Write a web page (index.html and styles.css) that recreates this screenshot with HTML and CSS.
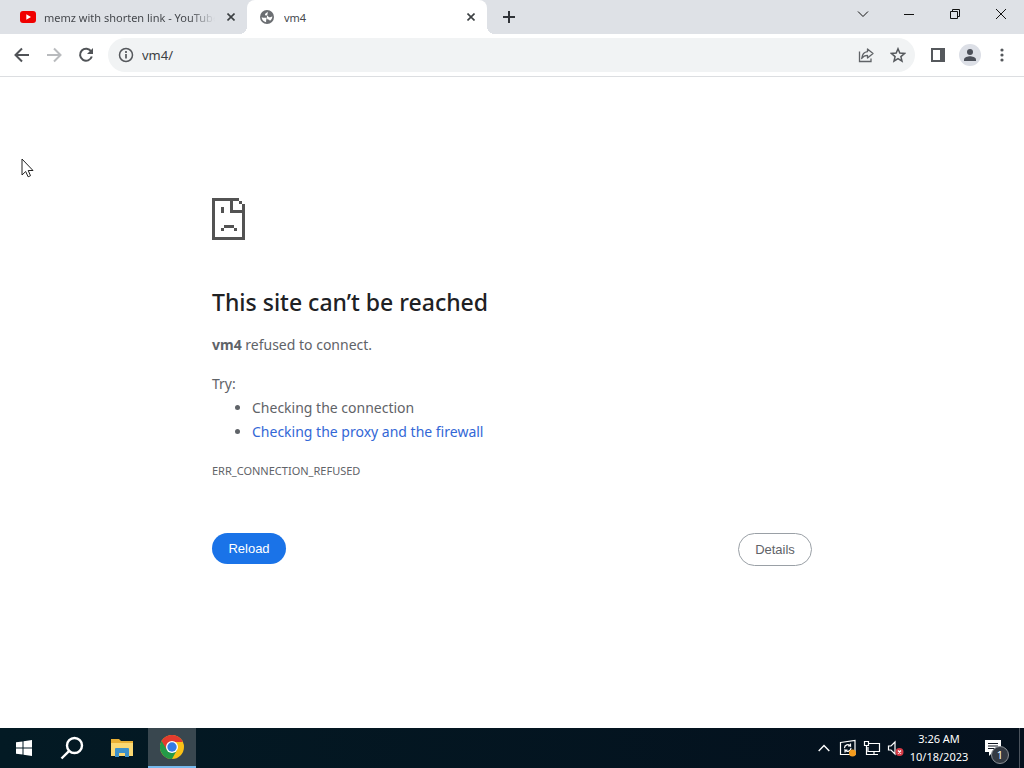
FILE: index.html
```html
<!DOCTYPE html>
<html lang="en">
  <head>
    <meta charset="UTF-8" />
    <title>vm4</title>
    <link rel="stylesheet" href="styles.css">
  </head>
  <body>
    <header class="tabstrip">
      <div class="tab">
        <svg width="16" height="16" viewBox="0 0 16 16">
          <rect x="0" y="2" width="16" height="12" rx="3" fill="#f00000" />
          <path d="M6.3 5.2v5.6L11 8z" fill="#fff" />
        </svg>
        <span class="tab-title faded">memz with shorten link - YouTube</span>
        <button class="tab-close" aria-label="Close tab">
          <svg width="8" height="8" viewBox="0 0 8 8"><path d="M.5.5l7 7M7.5.5l-7 7" /></svg>
        </button>
      </div>
      <div class="tab active">
        <svg width="16" height="16" viewBox="0 0 16 16">
          <circle cx="7" cy="8" r="7" fill="#6b6e72" />
          <path d="M8 2.500c-.2 1.500-2.800 1.200-3 2.800-.1 1.300 1.200 1.400 2.400 1.400.9 0 .8 1.500 2 1.600 1.300 0 1.700-.9 3-.8-.2 2.200-1.400 3.600-2.600 4.300-.3-1-1.300-1.100-2-1.200-.7-.2-.3-1.200-1-1.600C5.800 8.500 4 9 1.600 8.200c.2 2.500 1.900 4.500 4.500 5v-1.500" fill="#fff" />
        </svg>
        <span class="tab-title">vm4</span>
        <button class="tab-close" aria-label="Close tab">
          <svg width="8" height="8" viewBox="0 0 8 8"><path d="M.5.5l7 7M7.5.5l-7 7" /></svg>
        </button>
      </div>
      <button class="new-tab" aria-label="New tab">
        <svg width="12" height="12" viewBox="0 0 12 12"><path d="M6 0v12M0 6h12" stroke="#303338" stroke-width="2" /></svg>
      </button>
      <div class="window-buttons">
        <button aria-label="Search tabs">
          <svg width="12" height="12" viewBox="0 0 12 12"><path d="M1 3.500l5 5 5-5" /></svg>
        </button>
        <button aria-label="Minimize">
          <svg width="12" height="12" viewBox="0 0 12 12"><path d="M1 6.500h10" /></svg>
        </button>
        <button aria-label="Restore">
          <svg width="12" height="12" viewBox="0 0 12 12"><path d="M1.500 3.500h7v7h-7zM3.500 3V1.500h7v7H9" /></svg>
        </button>
        <button aria-label="Close">
          <svg width="12" height="12" viewBox="0 0 12 12"><path d="M1 1l10 10M11 1L1 11" /></svg>
        </button>
      </div>
    </header>

    <div class="toolbar">
      <button aria-label="Back">
        <svg width="16" height="16" viewBox="0 0 16 16"><path d="M15 8H2M8 1.500L1.500 8 8 14.500" stroke="#505357" stroke-width="2" fill="none" /></svg>
      </button>
      <button aria-label="Forward">
        <svg width="16" height="16" viewBox="0 0 16 16"><path d="M1 8h13M8 1.500L14.500 8 8 14.500" stroke="#b9bbbe" stroke-width="2" fill="none" /></svg>
      </button>
      <button aria-label="Reload page">
        <svg width="16" height="16" viewBox="0 0 16 16">
          <path d="M13.200 4.600A6 6 0 1 0 13.800 9.500" stroke="#505357" stroke-width="2" fill="none" />
          <path d="M15 1v6H9z" fill="#505357" />
        </svg>
      </button>
      <div class="omnibox">
        <svg width="16" height="16" viewBox="0 0 16 16">
          <circle cx="8" cy="8" r="6.500" stroke="#55585c" stroke-width="1.500" fill="none" />
          <path d="M8 7v4.500M8 4v2" stroke="#55585c" stroke-width="1.700" />
        </svg>
        <input type="text" aria-label="Address" value="vm4/" />
        <button aria-label="Share this page">
          <svg width="16" height="16" viewBox="0 0 16 16" fill="none" stroke="#606367" stroke-width="1.300">
            <path d="M1.500 4.500v10h11.500v-3" />
            <path d="M9.500 2v2.700C6 5 4.200 7.500 3.700 11.500 5.200 9.200 7 8.300 9.500 8.300V11L15 6.500z" stroke-linejoin="round" />
          </svg>
        </button>
        <button aria-label="Bookmark this tab">
          <svg width="16" height="16" viewBox="0 0 16 16"><path d="M8 1.800l1.800 4.300 4.700.4-3.600 3.100 1.100 4.600-4-2.500-4 2.500 1.100-4.600L1.500 6.500l4.700-.4z" stroke="#55585c" stroke-width="1.500" fill="none" /></svg>
        </button>
      </div>
      <button aria-label="Side panel">
        <svg width="16" height="16" viewBox="0 0 16 16"><path d="M1 1h14v14H1zM3 3v10h7V3z" fill="#55585c" fill-rule="evenodd" /></svg>
      </button>
      <button aria-label="Profile">
        <svg width="22" height="22" viewBox="0 0 22 22">
          <circle cx="11" cy="11" r="11" fill="#dcdfe6" />
          <circle cx="11" cy="8" r="3" fill="#4b4f58" />
          <path d="M5 17v-1.500c0-2.300 4-3.200 6-3.200s6 .9 6 3.200V17z" fill="#4b4f58" />
        </svg>
      </button>
      <button aria-label="Menu">
        <svg width="16" height="16" viewBox="0 0 16 16" fill="#55585c">
          <circle cx="8" cy="3" r="1.600" /><circle cx="8" cy="8" r="1.600" /><circle cx="8" cy="13" r="1.600" />
        </svg>
      </button>
    </div>

    <main>
      <div class="interstitial">
        <svg class="sad-page" width="34" height="42" viewBox="0 0 34 42" fill="#535353" shape-rendering="crispEdges">
          <path d="M0 0h27v3h3v3h3v36H0zM3 3v36h27V15H18V3zM21 3v9h9V6h-3V3z" fill-rule="evenodd" />
          <path d="M9 9h3v6H9zM9 30h3v3H9zM12 27h10v3H12zM22 30h3v3h-3z" />
        </svg>
        <h1>This site can’t be reached</h1>
        <p><strong>vm4</strong> refused to connect.</p>
        <div class="suggestions">
          <p>Try:</p>
          <ul>
            <li>Checking the connection</li>
            <li><a href="#buttons">Checking the proxy and the firewall</a></li>
          </ul>
        </div>
        <div class="error-code">ERR_CONNECTION_REFUSED</div>
        <div id="buttons" class="buttons">
          <button class="reload">Reload</button>
          <button class="details">Details</button>
        </div>
      </div>
    </main>

    <footer class="taskbar">
      <button aria-label="Start">
        <svg width="16" height="16" viewBox="0 0 16 16" fill="#fff"><path d="M0 2.300L6.500 1.400v6.100H0zM7.500 1.200L16 0v7.500H7.500zM0 8.500h6.500v6.100L0 13.700zM7.500 8.500H16V16l-8.500-1.200z" /></svg>
      </button>
      <button aria-label="Search">
        <svg width="24" height="24" viewBox="0 0 24 24" fill="none" stroke="#fff" stroke-width="2.400"><circle cx="14.500" cy="9.500" r="7.500" /><path d="M9.200 14.800L1.500 22.500" /></svg>
      </button>
      <button class="explorer" aria-label="File Explorer">
        <svg width="22" height="18" viewBox="0 0 22 18">
          <path d="M0 0h8l2 2h12v15H0z" fill="#e9b035" />
          <path d="M0 4h22v13H0z" fill="#fbd872" />
          <path d="M4 10q0-1 1-1h12q1 0 1 1v8h-4v-4H8v4H4z" fill="#3d91ca" />
        </svg>
      </button>
      <button class="running" aria-label="Google Chrome">
        <svg width="24" height="24" viewBox="0 0 24 24">
          <circle cx="12" cy="12" r="12" fill="#fbc116" />
          <path d="M12 12L1.600 6A12 12 0 0 0 12 24l5-9z" fill="#249a48" />
          <path d="M1.600 6A12 12 0 0 1 22.400 6L22.700 7H12L7 15z" fill="#e33b2e" />
          <circle cx="12" cy="12" r="6" fill="#fff" />
          <circle cx="12" cy="12" r="4.700" fill="#347be5" />
        </svg>
      </button>
      <div class="tray">
        <button aria-label="Show hidden icons">
          <svg width="12" height="8" viewBox="0 0 12 8"><path d="M.7 7L6 1.500 11.300 7" stroke="#fff" stroke-width="1.400" fill="none" /></svg>
        </button>
        <button aria-label="Windows Update">
          <svg width="18" height="18" viewBox="0 0 18 18" fill="none" stroke="#fff" stroke-width="1.200">
            <path d="M1.500 3.500L16 1.500v14H1.500z" />
            <path d="M5.500 9c0-3 4-4.500 6-2V4.500M11.500 7H9M12 9c0 3-4 4.500-6 2v2.500M6 11h2.500" />
            <circle cx="13.500" cy="14" r="3.500" fill="#f39b1d" stroke="none" />
          </svg>
        </button>
        <button aria-label="Network">
          <svg width="18" height="18" viewBox="0 0 18 18" fill="none" stroke="#fff" stroke-width="1.200">
            <path d="M5 4.500h11.500v8H5V8M8 15.500h7M11 12.500v3M1.500 2.500h4v4h-4zM3.500 6.500v9H8" />
          </svg>
        </button>
        <button aria-label="Volume muted">
          <svg width="18" height="18" viewBox="0 0 18 18">
            <path d="M1.500 7h2.500l4-4v12l-4-4H1.500z" stroke="#fff" stroke-width="1.200" fill="none" />
            <circle cx="12.500" cy="13" r="4" fill="#d53a45" />
            <path d="M11 11.500l3 3M14 11.500l-3 3" stroke="#fff" stroke-width="1.200" />
          </svg>
        </button>
        <div class="clock">
          <span>3:26 AM</span>
          <span>10/18/2023</span>
        </div>
        <button class="notifications" aria-label="Notifications, 1 new">
          <svg width="18" height="18" viewBox="0 0 18 18">
            <path d="M1 1h16v12H9l-4 4v-4H1z" fill="#fff" />
            <path d="M4 4.500h10M4 7h10M4 9.500h7" stroke="#111722" />
          </svg>
          <span class="badge">1</span>
        </button>
      </div>
    </footer>

    <svg class="cursor" width="13" height="20" viewBox="0 0 13 20">
      <path d="M1 1v16l3.700-3.500 2.400 5.300 2.400-1.100L7.200 12.500H12z" fill="#fff" stroke="#222" stroke-linejoin="round" />
    </svg>
  </body>
</html>
```

FILE: styles.css
```css
* {
  box-sizing: border-box;
}
body {
  margin: 0;
  min-height: 100vh;
  display: flex;
  flex-direction: column;
  background-color: #fff;
  color: #5f6368;
  font-family: "Noto Sans", "Open Sans", sans-serif;
}
button {
  display: flex;
  align-items: center;
  justify-content: center;
  padding: 0;
  border: none;
  background: transparent;
  cursor: pointer;
}
svg {
  display: block;
  flex: none;
}

/* Tabs */
.tabstrip {
  display: flex;
  height: 34px;
  padding-left: 7px;
  background-color: #dee1e6;
}
.tab {
  position: relative;
  display: flex;
  align-items: center;
  gap: 8px;
  width: 240px;
  padding: 0 8px 0 13px;
  font-size: 11px;
  color: #45484d;
}
.tab.active {
  background-color: #fff;
  border-radius: 8px 8px 0 0;
}
.tab.active::before,
.tab.active::after {
  content: "";
  position: absolute;
  bottom: 0;
  width: 8px;
  height: 8px;
}
.tab.active::before {
  right: 100%;
  background: radial-gradient(circle at 0 0, transparent 8px, #fff 8px);
}
.tab.active::after {
  left: 100%;
  background: radial-gradient(circle at 100% 0, transparent 8px, #fff 8px);
}
.tab-title {
  flex: 1;
  overflow: hidden;
  white-space: nowrap;
}
.tab-title.faded {
  mask-image: linear-gradient(to right, #000 85%, transparent);
}
.tab-close {
  width: 16px;
  height: 16px;
}
.tab-close path {
  stroke: #3c4043;
  stroke-width: 1.6;
}
.new-tab {
  width: 28px;
  margin-left: 8px;
}
.window-buttons {
  display: flex;
  margin-left: auto;
}
.window-buttons button {
  width: 46px;
  height: 28px;
}
.window-buttons path {
  fill: none;
  stroke: #111;
}

/* Toolbar */
.toolbar {
  display: flex;
  align-items: center;
  height: 43px;
  padding: 0 6px;
  border-bottom: 1px solid #dcdee1;
}
.toolbar button {
  width: 32px;
  height: 32px;
}
.omnibox {
  flex: 1;
  display: flex;
  align-items: center;
  height: 34px;
  margin: 0 7px 0 6px;
  padding: 0 1px 0 10px;
  border-radius: 17px;
  background-color: #f1f3f4;
}
.omnibox input {
  flex: 1;
  min-width: 0;
  padding: 0 8px;
  border: none;
  outline: none;
  background: transparent;
  color: #3c4043;
  font-family: inherit;
  font-size: 13px;
}

/* Error page */
main {
  flex: 1;
  padding: 121px 24px 0;
}
.interstitial {
  max-width: 600px;
  margin: 0 auto;
  font-size: 14px;
  line-height: 24px;
}
h1 {
  margin: 48px 0 16px;
  color: #202124;
  font-size: 23px;
  font-weight: 500;
  line-height: 29px;
}
.interstitial p {
  margin: 0;
}
.suggestions {
  margin-top: 15px;
}
ul {
  margin: 0;
  padding-left: 40px;
}
a {
  color: #3367d6;
  text-decoration: none;
}
.error-code {
  margin-top: 15px;
  font-size: 11px;
}
.buttons {
  display: flex;
  align-items: flex-start;
  justify-content: space-between;
  margin-top: 50px;
}
.buttons button {
  min-width: 74px;
  padding: 8px 16px;
  border-radius: 20px;
  font-family: "Liberation Sans", Arial, sans-serif;
  font-size: 13px;
  line-height: 15px;
}
.reload {
  background-color: #1a73e8;
  color: #fff;
}
.buttons .details {
  border: 1px solid #9aa0a6;
  color: #5f6368;
}

/* Taskbar */
.taskbar {
  display: flex;
  height: 40px;
  background: linear-gradient(to right, #031a24, #04101d);
  color: #fff;
}
.taskbar > button {
  width: 48px;
}
.taskbar > .explorer {
  width: 52px;
}
.taskbar > .running {
  border-bottom: 2px solid #76b9ed;
  background-color: #39474f;
}
.tray {
  display: flex;
  margin-left: auto;
  padding-right: 3px;
  border-right: 1px solid #4b535d;
  margin-right: 4px;
}
.tray > button {
  width: 24px;
}
.clock {
  display: flex;
  flex-direction: column;
  justify-content: center;
  width: 62px;
  text-align: center;
  font-size: 11px;
  line-height: 18px;
}
.tray > .notifications {
  position: relative;
  width: 46px;
}
.badge {
  position: absolute;
  left: 21px;
  top: 18px;
  width: 18px;
  height: 18px;
  border: 1px solid #8b9096;
  border-radius: 50%;
  background-color: #343a43;
  color: #fff;
  font-family: "Noto Sans", sans-serif;
  font-size: 11px;
  line-height: 16px;
}

.cursor {
  position: absolute;
  left: 21px;
  top: 158px;
}
```
